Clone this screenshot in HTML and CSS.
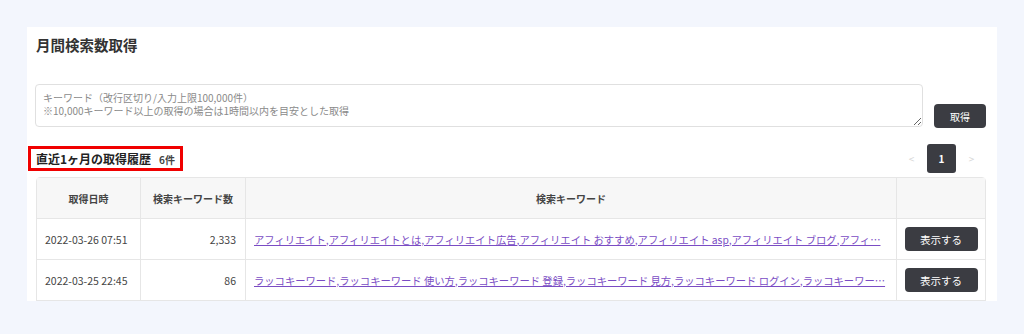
FILE: index.html
```html
<!DOCTYPE html>
<html lang="ja">
<head>
  <meta charset="UTF-8">
  <meta name="viewport" content="width=device-width, initial-scale=1.0">
  <title>月間検索数取得</title>
  <link rel="stylesheet" href="styles.css">
</head>
<body>

  <div class="card">
    <h1 class="page-title">月間検索数取得</h1>

    <!-- キーワード入力 -->
    <div class="search-form">
      <textarea class="keyword-input" placeholder="キーワード（改行区切り/入力上限100,000件）&#10;※10,000キーワード以上の取得の場合は1時間以内を目安とした取得"></textarea>
      <button class="dark-btn get-btn">取得</button>
    </div>

    <!-- 履歴 -->
    <div class="history-head">
      <h2 class="history-title">直近1ヶ月の取得履歴<span class="history-count">6件</span></h2>
      <div class="pager">
        <span class="pager-arrow">&lt;</span>
        <span class="pager-num">1</span>
        <span class="pager-arrow">&gt;</span>
      </div>
    </div>

    <table class="history-table">
      <colgroup>
        <col class="col-date">
        <col class="col-count">
        <col class="col-words">
        <col class="col-action">
      </colgroup>
      <thead>
        <tr>
          <th>取得日時</th>
          <th>検索キーワード数</th>
          <th>検索キーワード</th>
          <th></th>
        </tr>
      </thead>
      <tbody>
        <tr>
          <td>2022-03-26 07:51</td>
          <td class="num">2,333</td>
          <td class="words"><a href="#">アフィリエイト,アフィリエイトとは,アフィリエイト広告,アフィリエイト おすすめ,アフィリエイト asp,アフィリエイト ブログ,アフィ…</a></td>
          <td class="action"><button class="dark-btn show-btn">表示する</button></td>
        </tr>
        <tr>
          <td>2022-03-25 22:45</td>
          <td class="num">86</td>
          <td class="words"><a href="#">ラッコキーワード,ラッコキーワード 使い方,ラッコキーワード 登録,ラッコキーワード 見方,ラッコキーワード ログイン,ラッコキーワー…</a></td>
          <td class="action"><button class="dark-btn show-btn">表示する</button></td>
        </tr>
      </tbody>
    </table>
  </div>

</body>
</html>
```

FILE: styles.css
```css
* { margin: 0; padding: 0; box-sizing: border-box; }
body {
  font-family: "Noto Sans CJK JP", "Noto Sans", sans-serif;
  background: #f3f6fd;
  color: #333;
  padding: 27px 27px 0 27px;
}
.card {
  width: 970px;
  height: 274px;
  background: #fff;
  padding: 9px 11px 0 9px;
  overflow: hidden;
}
.page-title {
  font-size: 14.5px;
  line-height: 18px;
  font-weight: 700;
  color: #333;
}
.search-form {
  display: flex;
  align-items: flex-end;
  gap: 11px;
  margin-top: 30px;
}
.keyword-input {
  width: 888px;
  height: 43px;
  margin-left: -1px;
  padding: 6px 7px 5px 7px;
  border: 1px solid #e0e0e0;
  border-radius: 4px;
  font-family: inherit;
  font-size: 10px;
  line-height: 13px;
  color: #333;
}
.keyword-input::placeholder { color: #8a8a8a; }
.dark-btn {
  border: none;
  background-color: #3b3c42;
  color: #fff;
  font-family: inherit;
  border-radius: 4px;
  cursor: pointer;
}
.get-btn {
  width: 52px;
  height: 24px;
  font-size: 10px;
  margin-bottom: -1px;
}
.history-head {
  display: flex;
  justify-content: space-between;
  align-items: center;
  margin-top: 17px;
  height: 29px;
}
.history-title {
  margin-left: -8px;
  padding: 0 5px;
  height: 25px;
  border: 3px solid #f00000;
  font-size: 12px;
  line-height: 19px;
  font-weight: 700;
  color: #222;
}
.history-count {
  font-size: 10px;
  color: #444;
  margin-left: 8px;
}
.pager {
  display: flex;
  gap: 1px;
}
.pager-arrow,
.pager-num {
  width: 29px;
  height: 29px;
  display: flex;
  justify-content: center;
  align-items: center;
  font-size: 10px;
}
.pager-arrow { color: #d6d6d6; }
.pager-num {
  background-color: #3b3c42;
  color: #fff;
  border-radius: 3px;
  font-weight: 700;
}
.history-table {
  width: 950px;
  margin-top: 4px;
  table-layout: fixed;
  border-collapse: separate;
  border-spacing: 0;
  border: 1px solid #e6e6e6;
  border-radius: 4px 4px 0 0;
  font-size: 10.5px;
  color: #444;
}
.col-date { width: 104px; }
.col-count { width: 105px; }
.col-action { width: 88px; }
.history-table th,
.history-table td {
  height: 41px;
  border-right: 1px solid #e6e6e6;
  border-bottom: 1px solid #e6e6e6;
  padding: 0 8px;
  vertical-align: middle;
}
.history-table th:last-child,
.history-table td:last-child { border-right: none; }
.history-table th {
  background-color: #f7f7f7;
  font-weight: 700;
  font-size: 10px;
  text-align: center;
}
.history-table td { color: #444; }
.history-table .num { text-align: right; padding-right: 9px; }
.history-table .words {
  white-space: nowrap;
  font-size: 10.3px;
  color: #7a4cc4;
}
.words a { color: #7a4cc4; }
.history-table .action { text-align: center; padding: 0; }
.show-btn {
  width: 73px;
  height: 24px;
  font-size: 10.5px;
}
```
